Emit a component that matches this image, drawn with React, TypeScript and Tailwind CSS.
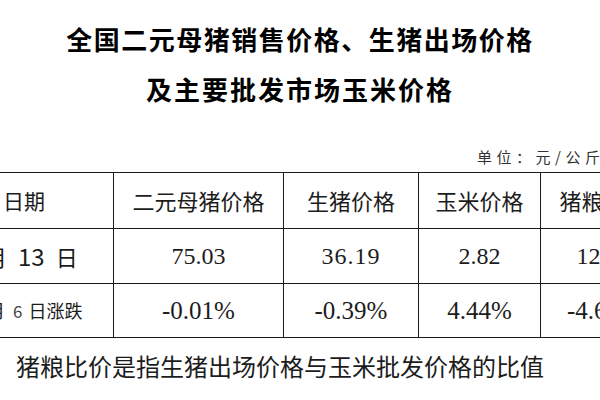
import React from "react";

const sans = { fontFamily: '"Noto Sans CJK SC", "Noto Sans", sans-serif' };
const serif = { fontFamily: '"Liberation Serif", "Noto Sans CJK SC", serif' };

function Cell({
  w,
  first,
  children,
  className = "",
}: {
  w: string;
  first?: boolean;
  children?: React.ReactNode;
  className?: string;
}) {
  return (
    <div
      className={`${w} shrink-0 h-full flex items-center overflow-hidden ${
        first ? "" : "border-l border-[#1a1a1a] justify-center"
      } ${className}`}
    >
      {children}
    </div>
  );
}

export default function App() {
  return (
    <div
      className="w-[600px] h-[400px] overflow-hidden bg-white text-[#1c1c1c]"
      style={sans}
    >
      <div className="pt-[14px]">
        <div className="text-center text-[26px] leading-[50px] font-bold text-black tracking-[1.5px] whitespace-nowrap">
          全国二元母猪销售价格、生猪出场价格
        </div>
        <div className="text-center text-[26px] leading-[50px] font-bold text-black tracking-[2px] whitespace-nowrap">
          及主要批发市场玉米价格
        </div>
      </div>

      <div className="mt-[33px] h-[20px] pl-[477px] text-[15px] leading-[20px] tracking-[4.5px] whitespace-nowrap text-[#333]">
        单位：元/公斤
      </div>

      <div className="mt-[5px] w-[600px] overflow-hidden border-y border-[#1a1a1a]">
        {/* header */}
        <div className="flex h-[55px] w-[666px]">
          <Cell w="w-[113px]" first>
            <span className="pl-[3px] text-[21px]">日期</span>
          </Cell>
          <Cell w="w-[170px]">
            <span className="text-[22px]">二元母猪价格</span>
          </Cell>
          <Cell w="w-[135px]">
            <span className="text-[22px]">生猪价格</span>
          </Cell>
          <Cell w="w-[122px]">
            <span className="text-[22px]">玉米价格</span>
          </Cell>
          <Cell w="w-[126px]">
            <span className="text-[22px]">猪粮比价</span>
          </Cell>
        </div>
        {/* row 2 */}
        <div className="flex h-[55px] w-[666px] border-t border-[#1a1a1a]">
          <Cell w="w-[113px]" first>
            <div className="flex items-center ml-[-15px] gap-[11px] text-[22px]">
              <span>月</span>
              <span className="text-[24px]">13</span>
              <span>日</span>
            </div>
          </Cell>
          <Cell w="w-[170px]">
            <span className="text-[24px]" style={serif}>75.03</span>
          </Cell>
          <Cell w="w-[135px]">
            <span className="text-[24px] tracking-[1px]" style={serif}>36.19</span>
          </Cell>
          <Cell w="w-[122px]">
            <span className="text-[24px]" style={serif}>2.82</span>
          </Cell>
          <Cell w="w-[126px]">
            <span className="text-[24px]" style={serif}>12.83</span>
          </Cell>
        </div>
        {/* row 3 */}
        <div className="flex h-[54px] w-[666px] border-t border-[#1a1a1a]">
          <Cell w="w-[113px]" first>
            <div className="flex items-center ml-[-13px] text-[18px]">
              <span>月</span>
              <span className="ml-[8px] text-[17px] text-[#444]">6</span>
              <span className="ml-[6px]">日涨跌</span>
            </div>
          </Cell>
          <Cell w="w-[170px]">
            <span className="text-[25px]" style={serif}>-0.01%</span>
          </Cell>
          <Cell w="w-[135px]">
            <span className="text-[25px]" style={serif}>-0.39%</span>
          </Cell>
          <Cell w="w-[122px]">
            <span className="text-[25px]" style={serif}>4.44%</span>
          </Cell>
          <Cell w="w-[126px]">
            <span className="text-[25px]" style={serif}>-4.62%</span>
          </Cell>
        </div>
      </div>

      <div className="mt-[12px] pl-[16px] text-[24px] leading-[32px] whitespace-nowrap text-[#1c1c1c]">
        猪粮比价是指生猪出场价格与玉米批发价格的比值
      </div>
    </div>
  );
}
